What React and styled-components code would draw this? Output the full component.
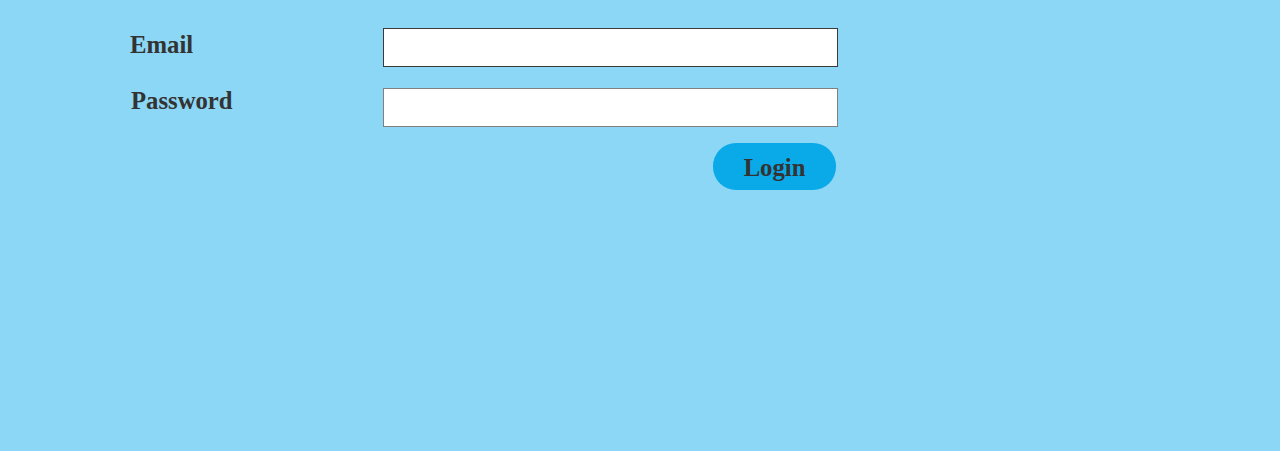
import React from "react";
import styled, { createGlobalStyle } from "styled-components";

const Global = createGlobalStyle`
  html, body { margin: 0; padding: 0; }
  body {
    background: #8cd7f6;
    font-family: "Liberation Serif", "Times New Roman", serif;
    width: 1280px;
    height: 451px;
    overflow: hidden;
  }
`;

const Page = styled.div`
  width: 1280px;
  height: 451px;
  box-sizing: border-box;
  padding: 28px 0 0 130px;
  background: #8cd7f6;
`;

const Form = styled.form`
  display: grid;
  grid-template-columns: 253px 455px;
  row-gap: 21px;
  align-items: start;
`;

const Label = styled.label`
  font-size: 24.7px;
  font-weight: bold;
  color: #333;
  line-height: 27px;
  margin-top: ${(p) => p.$offset}px;
  margin-left: ${(p) => p.$indent}px;
`;

const Input = styled.input`
  box-sizing: border-box;
  width: 455px;
  height: 39px;
  margin: 0;
  border: 1px solid ${(p) => p.$border};
  background: #fff;
  font-family: inherit;
  font-size: 16px;
  padding: 0 6px;
  outline: none;
`;

const Actions = styled.div`
  grid-column: 2;
  display: flex;
  justify-content: flex-end;
  margin-top: -5px;
  padding-right: 2px;
`;

const Button = styled.button`
  width: 123px;
  height: 47px;
  border: none;
  border-radius: 23px;
  background: #0aa9e8;
  color: #333;
  font-family: "Liberation Serif", "Times New Roman", serif;
  font-size: 24.7px;
  font-weight: bold;
  cursor: pointer;
  padding: 2px 0 0 0;
`;

export default function App() {
  return (
    <>
      <Global />
      <Page>
        <Form onSubmit={(e) => e.preventDefault()}>
          <Label $offset={3} $indent={0} htmlFor="email">Email</Label>
          <Input id="email" type="email" $border="#3a3a3a" />
          <Label $offset={-1} $indent={1} htmlFor="password">Password</Label>
          <Input id="password" type="password" $border="#808080" />
          <Actions>
            <Button type="submit">Login</Button>
          </Actions>
        </Form>
      </Page>
    </>
  );
}
